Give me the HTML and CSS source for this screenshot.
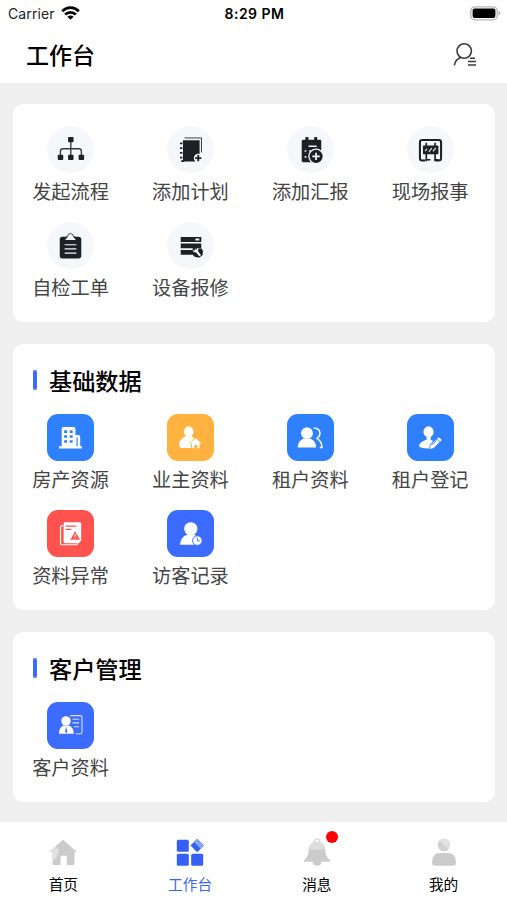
FILE: index.html
```html
<!DOCTYPE html>
<html lang="zh-CN">
<head>
  <meta charset="UTF-8" />
  <meta name="viewport" content="width=device-width, initial-scale=1.0"/>
  <title>工作台</title>
  <link rel="stylesheet" href="styles.css">
</head>
<body>

  <div class="status-bar">
    <div class="carrier">
      <span>Carrier</span>
      <svg width="19" height="14" viewBox="0 0 19 14">
        <g fill="none" stroke="#000" stroke-width="2.7">
          <path d="M1.2 5.2C6 .5 13 .5 17.8 5.2"/>
          <path d="M4.1 8.6C7.2 5.700 11.8 5.700 14.9 8.600"/>
        </g>
        <path d="M6.4 10.8C8.2 9.2 10.8 9.2 12.6 10.8L9.5 13.8Z"/>
      </svg>
    </div>
    <span class="time">8:29 PM</span>
    <div class="battery">
      <svg width="31" height="15" viewBox="0 0 31 15">
        <rect x=".8" y=".8" width="26.4" height="13" rx="4" fill="#fff" stroke="#b5b5b5" stroke-width="1.3"/>
        <rect x="2.6" y="2.6" width="22.8" height="9.4" rx="2"/>
        <path d="M28.6 5v4.6q1.5-.8 1.5-2.3T28.6 5" fill="#aaa"/>
      </svg>
    </div>
  </div>

  <header class="header">
    <h1>工作台</h1>
    <svg class="contacts" width="24" height="24" viewBox="0 0 24 24" fill="none" stroke="#3c3c3c" stroke-width="1.6">
      <circle cx="11.2" cy="8" r="7.2"/>
      <path d="M7.6 14.4C4 15.8 1.8 18.8 1.3 22.4"/>
      <path d="M17 15.2h5M15 18.6h8M15 22h8" stroke-width="1.5"/>
    </svg>
  </header>

  <main class="main">
    <section class="card">
      <div class="grid">
        <a class="item">
          <svg class="icon round" viewBox="0 0 48 48">
            <path d="M24.3 15v16M13.7 31v-5.300q0-2.500 2.500-2.500h16.400q2.500 0 2.500 2.500V31" fill="none" stroke="#34383c" stroke-width="1.4"/>
            <rect x="21.500" y="11.200" width="5.600" height="5.400" rx="1"/>
            <rect x="11" y="29.400" width="5.600" height="5.400" rx="1"/>
            <rect x="21.500" y="29.400" width="5.600" height="5.400" rx="1"/>
            <rect x="32.300" y="29.400" width="5.600" height="5.400" rx="1"/>
          </svg>
          <span>发起流程</span>
        </a>
        <a class="item">
          <svg class="icon round" viewBox="0 0 48 48">
            <path d="M18 12.200h17.200V27" fill="none" stroke="#34383c" stroke-width="1"/>
            <path d="M16.300 14.500H33.300V36.200H16.300Z"/>
            <path d="M13.300 17.800h2.400M13.300 22.600h2.400M13.300 27.400h2.400M13.300 32.200h2.400M14.500 35.800h3" stroke="#1d2126" stroke-width="1.8"/>
            <circle cx="31.900" cy="32.800" r="4.500" fill="#f5f8fa"/>
            <path d="M31.900 29.600v6.400M28.700 32.800h6.400" stroke="#1d2126" stroke-width="2"/>
          </svg>
          <span>添加计划</span>
        </a>
        <a class="item">
          <svg class="icon round" viewBox="0 0 48 48">
            <path d="M16.500 14h2.300v-2.800h3V14h6v-2.800h3V14h2.700q1.500 0 1.500 1.500V35.500q0 1.500-1.500 1.500h-17q-1.500 0-1.500-1.500v-20Q15 14 16.500 14Z"/>
            <path d="M22 20.700h8.300M22.600 25.500h2M18 25.500h1.700M18 31.500h1.700" stroke="#f5f8fa" stroke-width="1.700"/>
            <circle cx="29.700" cy="31" r="8" fill="#f5f8fa"/>
            <circle cx="29.700" cy="31" r="6.700"/>
            <path d="M29.700 27.200v7.600M25.900 31h7.600" stroke="#f5f8fa" stroke-width="1.800"/>
          </svg>
          <span>添加汇报</span>
        </a>
        <a class="item">
          <svg class="icon round" viewBox="0 0 48 48">
            <path d="M18.500 35.300h-3q-2.300 0-2.300-2.300V16.500q0-2.300 2.300-2.300h17q2.300 0 2.300 2.300V33q0 2.300-2.300 2.300H29.500" fill="none" stroke="#1d2126" stroke-width="2.100"/>
            <path d="M19.700 17v19M28.700 17v19" stroke="#1d2126" stroke-width="1.700"/>
            <path d="M19 34.400h5M28 34.400h4" stroke="#1d2126" stroke-width="1.500"/>
            <rect x="16.300" y="20" width="15.800" height="8.800" rx=".8"/>
            <path d="M18.500 25.700l2-2.500M22.300 26.500l3-4M26.500 26l3-3.700" stroke="#e6eaec" stroke-width="1.200"/>
          </svg>
          <span>现场报事</span>
        </a>
        <a class="item">
          <svg class="icon round" viewBox="0 0 48 48">
            <rect x="13" y="15" width="22" height="22.300" rx="2.800"/>
            <path d="M18.500 18.300L24 12l5.500 6.300Z" fill="#f5f8fa"/>
            <path d="M18.900 16.200q.2-1.700 2-1.700.8-2.800 3.100-2.800t3.100 2.800q1.800 0 2 1.700" fill="none" stroke="#34383c" stroke-width="1"/>
            <path d="M18 23.200h12M18 27.500h12M18 31.800h12" stroke="#f5f8fa" stroke-width="1.200"/>
          </svg>
          <span>自检工单</span>
        </a>
        <a class="item">
          <svg class="icon round" viewBox="0 0 48 48">
            <path d="M14 15.300h21v5H14ZM14 22h21v4.700H14ZM14 28.500h12v5H14Z"/>
            <path d="M29 17.800h4" stroke="#f5f8fa" stroke-width="2"/>
            <path d="M26.500 26.500l9 .5 1.300 3-.6 4-3.500 2.400-4.500-1-3.200-3Z"/>
            <path d="M29.300 28.700l4 5" stroke="#f5f8fa" stroke-width="2.200" stroke-linecap="round"/>
            <path d="M26.700 29.200l2.300 1.300 2.300-1.500-.1-2.500" stroke="#f5f8fa" stroke-width="1.300" fill="none"/>
          </svg>
          <span>设备报修</span>
        </a>
      </div>
    </section>

    <section class="card titled">
      <h2>基础数据</h2>
      <div class="grid">
        <a class="item">
          <svg class="icon tile azure" viewBox="0 0 48 48">
            <path d="M15 33V15q0-1.700 1.700-1.700h10.600q1.700 0 1.700 1.700v6.500h3q1.900 0 1.900 1.900V33h1.800v2.300H12.300V33Z"/>
            <path d="M17.500 18h3M23.200 18h3M17.500 23h3M23.200 23h3M17.500 28h3M23.200 28h3" stroke="#2f80fd" stroke-width="2.600"/>
            <path d="M30.700 24v9" stroke="#2f80fd" stroke-width="1.200"/>
          </svg>
          <span>房产资源</span>
        </a>
        <a class="item">
          <svg class="icon tile orange" viewBox="0 0 48 48">
            <ellipse cx="22.200" cy="18" rx="4.900" ry="5.200"/>
            <path d="M19.500 22.500h5.500l4 3.300-3 9h-10q-3.700 0-3.700-3.400 0-5.700 7.200-8.900Z"/>
            <path d="M29.300 23.500l6.500 6.500-1.800 1.200V35h-9.400v-3.800L22.800 30Z" fill="#ffb23f"/>
            <path d="M29.300 24.600l5.500 5.200-.7.900h-.9v4.200h-2.300v-3.200h-3v3.200h-2.300v-4.200h-1l-.8-.9Z"/>
          </svg>
          <span>业主资料</span>
        </a>
        <a class="item">
          <svg class="icon tile azure" viewBox="0 0 48 48">
            <circle cx="20.400" cy="19.600" r="6"/>
            <path d="M17 25h6.800q5.900 2.500 5.900 9.300H11Q11 27.500 17 25Z"/>
            <path d="M27.200 14.300q6 .2 6.500 5.200 0 3.500-3.200 5.500 5 2.800 5.300 9.300h-2.300" fill="none" stroke="#fff" stroke-width="1.500"/>
          </svg>
          <span>租户资料</span>
        </a>
        <a class="item">
          <svg class="icon tile azure" viewBox="0 0 48 48">
            <ellipse cx="22" cy="18.300" rx="5.200" ry="5.700"/>
            <path d="M20 22h4.200v4.200l2.500 1.500-3.500 4-.5 3.600q-8 .2-10.500-2.300.3-4.700 7.800-6.800Z"/>
            <path d="M23.300 35.700l.9-4 8.300-8 3 2.900-8.300 8.200Z"/>
            <path d="M30.500 25.400l3.200 3.200M25.500 31.800l5-5" stroke="#2f80fd" stroke-width=".8"/>
          </svg>
          <span>租户登记</span>
        </a>
        <a class="item">
          <svg class="icon tile red" viewBox="0 0 48 48">
            <path d="M16.300 16h-1q-1.500 0-1.500 1.500V34q0 1.500 1.500 1.500h14.500q1.500 0 1.500-1.500" fill="none" stroke="#fff" stroke-width="1.200"/>
            <path d="M18.500 12.500H33.500q1.400 0 1.400 1.400V31.500l-2.500 2.400H18.500q-1.500 0-1.500-1.500V14q0-1.500 1.500-1.500Z"/>
            <path d="M19 16.500h11M19 19.900h6" stroke="#fd524d" stroke-width="1.300"/>
            <path d="M28.700 21.700l4.900 8.600h-9.800Z" fill="#fd524d"/>
            <path d="M28.700 24.500v3M28.700 28.300v1" stroke="#fff" stroke-width="1"/>
          </svg>
          <span>资料异常</span>
        </a>
        <a class="item">
          <svg class="icon tile blue" viewBox="0 0 48 48">
            <circle cx="24.300" cy="19.200" r="6.800"/>
            <path d="M21 25h6.500q4 1.500 5.500 5l-3 5.500H13.300Q13.500 27.500 21 25Z"/>
            <circle cx="31" cy="31.300" r="4.900" stroke="#3b6cff" stroke-width="1"/>
            <path d="M31 28.500v3h2.500" stroke="#3b6cff" stroke-width="1" fill="none"/>
          </svg>
          <span>访客记录</span>
        </a>
      </div>
    </section>

    <section class="card titled">
      <h2>客户管理</h2>
      <div class="grid">
        <a class="item">
          <svg class="icon tile blue" viewBox="0 0 48 48">
            <circle cx="19.400" cy="19.300" r="4.800"/>
            <path d="M16.500 24h6q4.800 2 4.800 8.400H12.300Q12.300 26 16.500 24Z"/>
            <path d="M19.600 25l-1.200 5.500 1.200 1.500 1.200-1.500Z" fill="#3b6cff"/>
            <path d="M23.500 13.900h10.700q1.500 0 1.500 1.500v15.500q0 1.500-1.500 1.500h-5" fill="none" stroke="#d5e0ff" stroke-width="1.100"/>
            <path d="M26 17.600h6.800M26 21.300h6.800M27.500 25.300h5.300" stroke="#d5e0ff" stroke-width="1.100"/>
          </svg>
          <span>客户资料</span>
        </a>
      </div>
    </section>
  </main>

  <nav class="tabbar">
    <a class="tab">
      <svg width="28" height="28" viewBox="0 0 28 28">
        <path d="M14 1.800L28 14h-2.500v11.500q0 1.500-1.500 1.500h-6.100v-9.300h-6.300V27H5q-1.500 0-1.500-1.500V14H0Z" fill="#cbcbcb"/>
        <path d="M6.500 8.300L0 14h3.500v9Q9.500 20 10 12Z" fill="#e0e0e0"/>
      </svg>
      <span>首页</span>
    </a>
    <a class="tab active">
      <svg width="28" height="28" viewBox="0 0 28 28">
        <rect x=".8" y="1.800" width="12" height="12" rx="1.500"/>
        <rect x=".8" y="15.700" width="12" height="12" rx="1.500"/>
        <rect x="15.200" y="15.700" width="12" height="12" rx="1.500"/>
        <path d="M21.200.8l6.700 6.700-6.700 6.800-6.700-6.800Z"/>
        <path d="M21.200.8l6.700 6.700-3.200 3.300-6.700-6.800Z" fill="#86a4fa"/>
      </svg>
      <span>工作台</span>
    </a>
    <a class="tab">
      <svg width="28" height="28" viewBox="0 0 28 28">
        <circle cx="14" cy="3.800" r="2.800" fill="none" stroke="#dedede" stroke-width="1.500"/>
        <path d="M14 3.500q8.500.8 8.500 9.500 0 6 4.500 9.200v1.500h-8.500Q18 27.800 14 27.800t-4.500-4.100H1v-1.500Q5.500 19 5.500 13 5.500 4.300 14 3.500Z" fill="#cbcbcb"/>
        <path d="M14 3.500q7.500.7 8.400 7.500Q14 13 5.600 11 6.500 4.200 14 3.500Z" fill="#dedede"/>
      </svg>
      <i class="dot"></i>
      <span>消息</span>
    </a>
    <a class="tab">
      <svg width="28" height="28" viewBox="0 0 28 28">
        <circle cx="14" cy="7" r="6.300" fill="#d2d2d2"/>
        <path d="M9.500 2.600A6.300 6.300 0 0 1 18.500 11.400Z" fill="#e2e2e2"/>
        <path d="M2 24.500Q2 15 10 15h8q8 0 8 9.500 0 3.200-3.200 3.200H5.200Q2 27.700 2 24.500Z" fill="#cbcbcb"/>
      </svg>
      <span>我的</span>
    </a>
  </nav>

</body>
</html>
```
FILE: styles.css
```css
:root {
  --bg: #efefef;
  --text: #444;
  --azure: #2f80fd;
  --blue: #3b6cff;
  --orange: #ffb23f;
  --red: #fd524d;
}

* {
  margin: 0;
  padding: 0;
  box-sizing: border-box;
}

body {
  height: 100vh;
  display: flex;
  flex-direction: column;
  background: var(--bg);
  color: #000;
  font-family: "Noto Sans CJK SC", sans-serif;
  overflow: hidden;
}

/* status bar */
.status-bar {
  height: 27px;
  display: grid;
  grid-template-columns: 1fr auto 1fr;
  align-items: center;
  padding: 0 6px 0 8px;
  background: #fff;
  font-family: Inter, sans-serif;
  font-size: 14px;
}

.carrier {
  display: flex;
  align-items: center;
  gap: 6px;
  color: #222;
  letter-spacing: 0.1px;
}

.carrier svg {
  margin-top: -2px;
}

.time {
  font-weight: 600;
  letter-spacing: 0.5px;
}

.battery {
  display: flex;
  justify-content: flex-end;
}

/* header */
.header {
  height: 56px;
  display: flex;
  align-items: center;
  justify-content: space-between;
  padding: 0 30px 0 26px;
  background: #fff;
}

.header h1 {
  padding-bottom: 3px;
  font-size: 23px;
  font-weight: 500;
}

/* cards */
.main {
  flex: 1;
  display: flex;
  flex-direction: column;
  gap: 22px;
  padding: 21px 12px 0 13px;
}

.card {
  height: 218px;
  padding: 22px 24.9px 0 17.6px;
  border-radius: 10px;
  background: #fff;
}

.card.titled {
  height: auto;
  padding-bottom: 20px;
}

.card h2 {
  display: flex;
  align-items: center;
  gap: 12px;
  height: 28px;
  margin: 0 0 20px 2.4px;
  font-size: 23.2px;
  font-weight: 500;
}

.card h2::before {
  content: "";
  width: 4px;
  height: 20px;
  border-radius: 2px;
  background: var(--blue);
}

.grid {
  display: grid;
  grid-template-columns: repeat(4, 1fr);
  gap: 16px 40px;
}

.item {
  height: 80px;
  display: flex;
  flex-direction: column;
  align-items: center;
  color: var(--text);
  font-size: 19.2px;
  line-height: 28px;
  white-space: nowrap;
}

.icon {
  width: 47px;
  height: 47px;
  flex: none;
  margin-bottom: 4px;
}

.round {
  border-radius: 50%;
  background: #f5f8fa;
  fill: #1d2126;
}

.tile {
  border-radius: 11px;
  fill: #fff;
}

.azure { background: var(--azure); }
.blue { background: var(--blue); }
.orange { background: var(--orange); }
.red { background: var(--red); }

/* bottom tabs */
.tabbar {
  height: 78px;
  display: flex;
  background: #fff;
}

.tab {
  position: relative;
  flex: 1;
  display: flex;
  flex-direction: column;
  align-items: center;
  gap: 7px;
  padding-top: 16px;
  font-size: 14.7px;
  line-height: 22px;
}

.tab.active {
  color: #3b66f0;
  fill: #3560f2;
}

.dot {
  position: absolute;
  top: 9px;
  left: calc(50% + 9px);
  width: 12px;
  height: 12px;
  border-radius: 50%;
  background: #f00;
}
```
